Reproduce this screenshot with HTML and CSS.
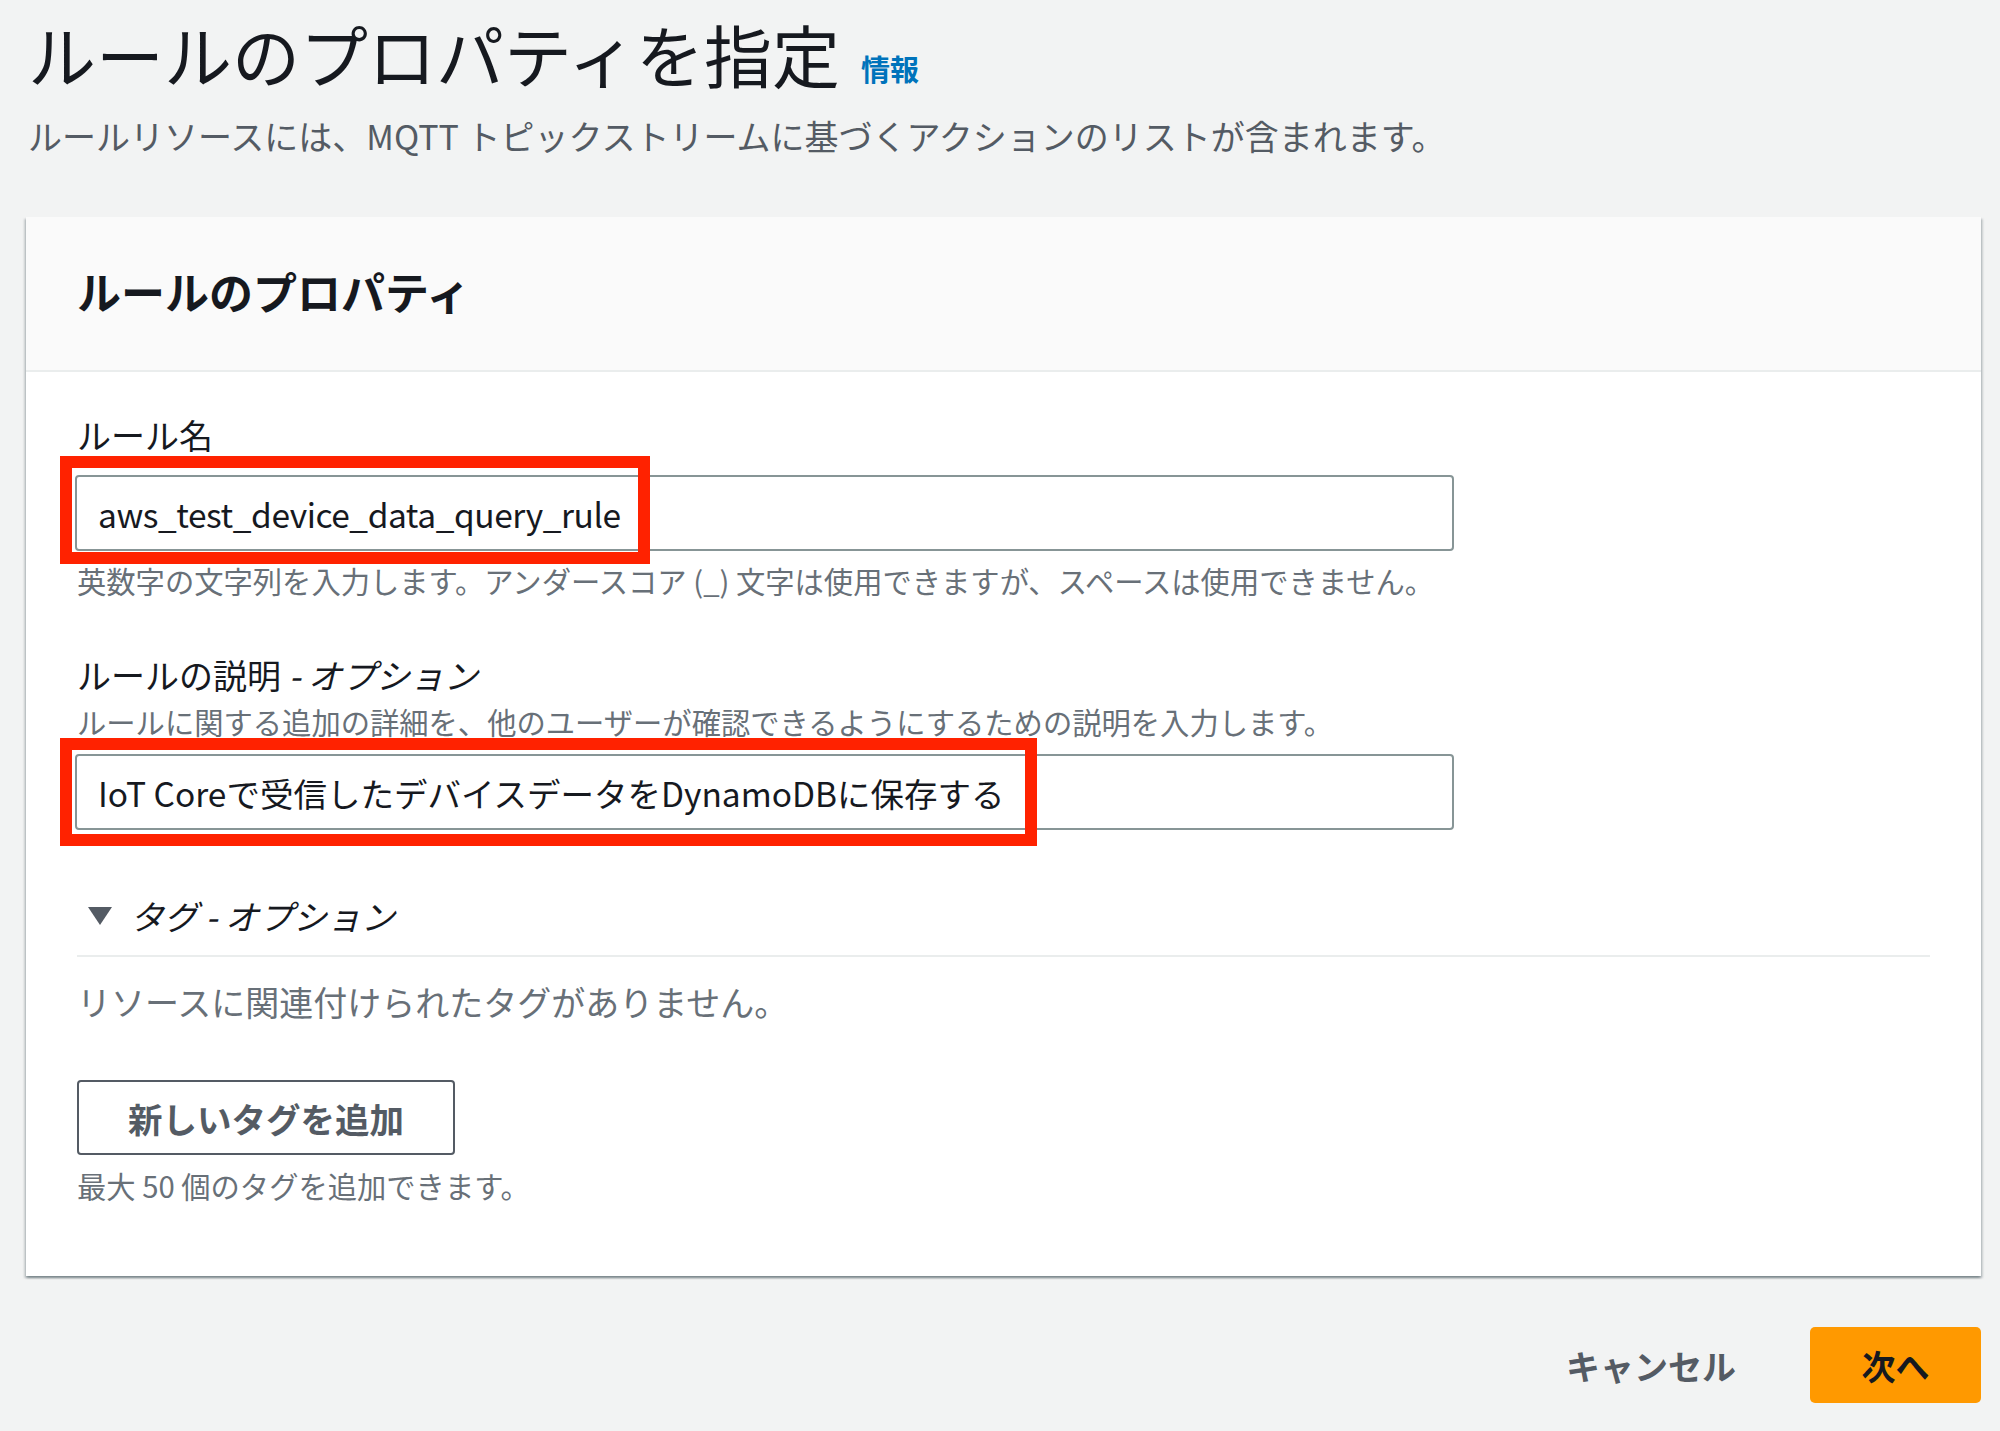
FILE: index.html
```html
<!DOCTYPE html>
<html lang="ja">
<head>
<meta charset="utf-8">
<title>ルールのプロパティを指定</title>
<link rel="stylesheet" href="styles.css">
</head>
<body>
<div class="page">
  <header class="page-header">
    <h1 class="title">ルールのプロパティを指定<a class="info" href="#">情報</a></h1>
    <p class="subtitle">ルールリソースには、MQTT トピックストリームに基づくアクションのリストが含まれます。</p>
  </header>

  <section class="card">
    <div class="card-header">
      <h2 class="card-title">ルールのプロパティ</h2>
    </div>
    <div class="card-body">
      <div class="field field-name">
        <label class="label" for="rule-name">ルール名</label>
        <div class="input-wrap">
          <input id="rule-name" class="input input-latin" type="text" value="aws_test_device_data_query_rule" readonly>
          <span class="highlight hl-name"></span>
        </div>
        <p class="hint">英数字の文字列を入力します。アンダースコア (_) 文字は使用できますが、スペースは使用できません。</p>
      </div>

      <div class="field field-desc">
        <label class="label" for="rule-desc">ルールの説明 <i class="opt">- オプション</i></label>
        <p class="desc">ルールに関する追加の詳細を、他のユーザーが確認できるようにするための説明を入力します。</p>
        <div class="input-wrap">
          <input id="rule-desc" class="input" type="text" value="IoT Coreで受信したデバイスデータをDynamoDBに保存する" readonly>
          <span class="highlight hl-desc"></span>
        </div>
      </div>

      <div class="tags">
        <div class="tags-header">
          <svg class="caret" width="24" height="18" viewBox="0 0 24 18"><polygon points="0,0 24,0 12,18" fill="#545b64"/></svg>
          <span class="tags-title">タグ - オプション</span>
        </div>
        <p class="empty">リソースに関連付けられたタグがありません。</p>
        <button class="btn-normal" type="button">新しいタグを追加</button>
        <p class="hint">最大 50 個のタグを追加できます。</p>
      </div>
    </div>
  </section>

  <footer class="actions">
    <button class="btn-link" type="button">キャンセル</button>
    <button class="btn-primary" type="button">次へ</button>
  </footer>
</div>
</body>
</html>
```
FILE: styles.css
```css
* { box-sizing: border-box; }

html, body {
  margin: 0;
  padding: 0;
}

body {
  background: #f2f3f3;
  color: #16191f;
  font-family: "Noto Sans CJK JP", "Noto Sans", sans-serif;
  width: 2000px;
  min-height: 1431px;
}

.page {
  padding: 0 19px 0 26px;
}

.page-header {
  padding-top: 14px;
  padding-left: 2px;
}

.title {
  margin: 0;
  font-size: 68px;
  line-height: 80px;
  font-weight: 400;
  color: #16191f;
}

.info {
  font-size: 29px;
  line-height: 1;
  font-weight: 700;
  color: #0073bb;
  text-decoration: none;
  margin-left: 21px;
  position: relative;
  top: -2px;
}

.subtitle {
  margin: 18px 0 0;
  font-size: 34px;
  line-height: 48px;
  color: #545b64;
}

.card {
  margin-top: 57px;
  background: #fff;
  box-shadow: 0 2px 2px 0 rgba(0, 28, 36, 0.3), 2px 2px 2px 0 rgba(0, 28, 36, 0.15), -2px 2px 2px 0 rgba(0, 28, 36, 0.15);
}

.card-header {
  background: #fafafa;
  border-bottom: 2px solid #eaeded;
  padding: 46px 51px 51px;
}

.card-title {
  margin: 0;
  font-size: 44px;
  line-height: 56px;
  font-weight: 700;
}

.card-body {
  padding: 41px 51px 71px;
}

.label {
  display: block;
  font-size: 34px;
  line-height: 44px;
  color: #16191f;
}

.opt {
  font-style: italic;
}

.input-wrap {
  position: relative;
  width: 1379px;
  margin-left: -2px;
}

.input {
  display: block;
  width: 100%;
  height: 76px;
  border: 2px solid #879596;
  border-radius: 4px;
  background: #fff;
  padding: 0 21px;
  font-family: "Noto Sans CJK JP", "Noto Sans", sans-serif;
  font-size: 33.5px;
  color: #16191f;
  outline: none;
}

.input-latin {
  letter-spacing: -0.45px;
}

.highlight {
  position: absolute;
  border: 12px solid #ff2200;
  pointer-events: none;
}

.hl-name {
  left: -15px;
  top: -19px;
  width: 590px;
  height: 108px;
}

.hl-desc {
  left: -15px;
  top: -16px;
  width: 977px;
  height: 108px;
}

.field-name .input-wrap {
  margin-top: 18px;
}

.hint {
  margin: 9px 0 0;
  font-size: 29.3px;
  line-height: 40px;
  color: #687078;
}

.field-desc {
  margin-top: 53px;
}

.desc {
  margin: 4px 0 0;
  font-size: 29.3px;
  line-height: 40px;
  color: #687078;
}

.field-desc .input-wrap {
  margin-top: 13px;
}

.tags {
  margin-top: 64px;
}

.tags-header {
  display: flex;
  align-items: center;
  gap: 18px;
  padding-left: 11px;
  padding-bottom: 17px;
  border-bottom: 2px solid #eaeded;
  height: 63px;
}

.caret {
  display: block;
  flex: none;
}

.tags-title {
  font-size: 34px;
  line-height: 44px;
  font-style: italic;
  color: #16191f;
}

.empty {
  margin: 23px 0 0;
  font-size: 34px;
  line-height: 44px;
  color: #687078;
}

.btn-normal {
  display: block;
  margin-top: 56px;
  width: 378px;
  height: 75px;
  border: 2px solid #545b64;
  border-radius: 4px;
  background: #fff;
  font-family: "Noto Sans CJK JP", "Noto Sans", sans-serif;
  font-size: 34.5px;
  font-weight: 700;
  color: #545b64;
  padding: 0;
}

.btn-normal + .hint {
  margin-top: 10px;
}

.actions {
  display: flex;
  justify-content: flex-end;
  align-items: center;
  gap: 34px;
  margin-top: 51px;
}

.btn-link {
  background: transparent;
  border: none;
  padding: 0 40px;
  height: 76px;
  font-family: "Noto Sans CJK JP", "Noto Sans", sans-serif;
  font-size: 34px;
  font-weight: 700;
  color: #545b64;
}

.btn-primary {
  width: 171px;
  height: 76px;
  background: #ff9900;
  border: none;
  border-radius: 5px;
  font-family: "Noto Sans CJK JP", "Noto Sans", sans-serif;
  font-size: 34px;
  font-weight: 700;
  color: #16191f;
  padding: 0;
}
```
